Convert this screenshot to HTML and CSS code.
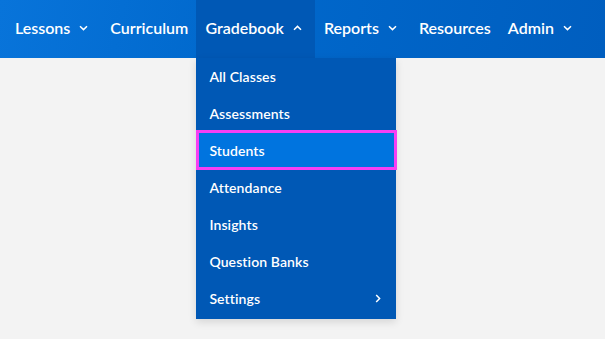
FILE: index.html
```html
<!DOCTYPE html>
<html lang="en">
<head>
  <meta charset="UTF-8">
  <title>Gradebook</title>
  <link rel="stylesheet" href="styles.css">
</head>
<body>
  <nav class="topnav">
    <div class="nav-item">Lessons
      <svg class="chev" viewBox="0 0 9 6"><path d="M1 1.2 4.5 4.6 8 1.2"/></svg>
    </div>
    <div class="nav-item plain">Curriculum</div>
    <div class="nav-item open">Gradebook
      <svg class="chev" viewBox="0 0 9 6"><path d="M1 4.8 4.5 1.4 8 4.8"/></svg>
      <ul class="dropdown">
        <li>All Classes</li>
        <li>Assessments</li>
        <li class="focused">Students</li>
        <li>Attendance</li>
        <li>Insights</li>
        <li>Question Banks</li>
        <li class="has-sub">Settings
          <svg class="chev-right" viewBox="0 0 6 9"><path d="M1.2 1 4.6 4.5 1.2 8"/></svg>
        </li>
      </ul>
    </div>
    <div class="nav-item">Reports
      <svg class="chev" viewBox="0 0 9 6"><path d="M1 1.2 4.5 4.6 8 1.2"/></svg>
    </div>
    <div class="nav-item plain">Resources</div>
    <div class="nav-item">Admin
      <svg class="chev" viewBox="0 0 9 6"><path d="M1 1.2 4.5 4.6 8 1.2"/></svg>
    </div>
  </nav>
</body>
</html>
```

FILE: styles.css
```css
* {
  box-sizing: border-box;
}

body {
  margin: 0;
  min-height: 100vh;
  background: #f3f3f3;
  font-family: 'Lato', 'Liberation Sans', sans-serif;
}

.topnav {
  display: flex;
  height: 58px;
  padding: 0 0 3px 6px;
  background: linear-gradient(100deg, #0874da 0%, #0068cc 40%, #005ebf 100%);
  color: white;
}

.nav-item {
  position: relative;
  display: flex;
  align-items: center;
  padding: 0 8px 0 9px;
  font-size: 16px;
  font-weight: 600;
}

.nav-item.open {
  background: #0058b5;
  margin-bottom: -3px;
  padding-bottom: 3px;
}

.chev {
  width: 9px;
  height: 6px;
  margin: 1px 5px 0 9px;
  fill: none;
  stroke: white;
  stroke-width: 1.5;
}

.dropdown {
  position: absolute;
  top: 100%;
  left: 0;
  width: 200px;
  margin: 0;
  padding: 0 0 2px 0;
  list-style: none;
  background: #0058b5;
  box-shadow: 0 3px 8px rgba(0,0,0,0.12);
  z-index: 10;
}

.dropdown li {
  position: relative;
  display: flex;
  align-items: center;
  height: 37px;
  padding: 0 13px;
  font-size: 14px;
  font-weight: 600;
  letter-spacing: 0.1px;
}

.dropdown li.focused {
  background: #0074df;
}

.dropdown li.focused::after {
  content: '';
  position: absolute;
  top: -2px;
  bottom: -1px;
  left: 0;
  right: -1px;
  border: 3px solid #f63ff4;
}

.has-sub {
  justify-content: space-between;
}

.chev-right {
  width: 6px;
  height: 9px;
  margin-right: 2px;
  fill: none;
  stroke: white;
  stroke-width: 1.5;
}
```
